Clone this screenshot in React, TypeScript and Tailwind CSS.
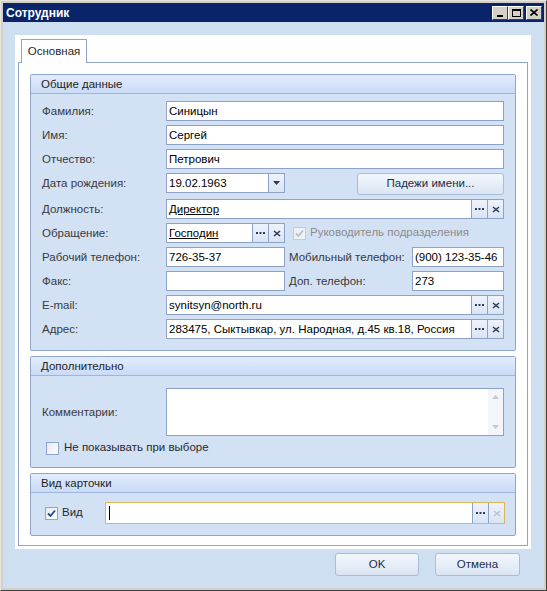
import { ReactNode } from 'react'

const font = { fontFamily: '"Liberation Sans", Arial, sans-serif' }

function Dots() {
  return (
    <div className="w-4 h-full flex items-center justify-center border-l border-[#8da2c4] bg-gradient-to-b from-[#eef3fb] to-[#d9e4f4]">
      <svg width="9" height="3" viewBox="0 0 9 3">
        <rect x="0" y="0" width="2" height="2" fill="#2b3d5c" />
        <rect x="3.5" y="0" width="2" height="2" fill="#2b3d5c" />
        <rect x="7" y="0" width="2" height="2" fill="#2b3d5c" />
      </svg>
    </div>
  )
}

function Clear({ faded }: { faded?: boolean }) {
  const c = faded ? '#b9c3d2' : '#2b3d5c'
  return (
    <div className="w-4 h-full flex items-center justify-center border-l border-[#8da2c4] bg-gradient-to-b from-[#eef3fb] to-[#d9e4f4]">
      <svg width="8" height="7" viewBox="0 0 8 7">
        <path d="M1 1 L7 6 M7 1 L1 6" stroke={c} strokeWidth="1.6" />
      </svg>
    </div>
  )
}

function Field({ value, link, buttons, className = '' }: { value?: string; link?: boolean; buttons?: boolean; className?: string }) {
  return (
    <div className={`h-5 flex bg-white border border-[#8da2c4] ${className}`}>
      <div className={`flex-1 px-[2px] leading-[18px] text-[11.5px] text-black truncate ${link ? 'underline' : ''}`}>{value}</div>
      {buttons && (
        <>
          <Dots />
          <Clear />
        </>
      )}
    </div>
  )
}

function Label({ children, w = 'w-[124px]' }: { children: ReactNode; w?: string }) {
  return <div className={`${w} shrink-0 text-[11.5px] text-[#3a3a3a] leading-5`}>{children}</div>
}

function Group({ title, children, className = '' }: { title: string; children: ReactNode; className?: string }) {
  return (
    <div className={`border border-[#8ea6ca] rounded-[2px] bg-[#d3e1f5] ${className}`}>
      <div className="h-[19px] px-[10px] text-[11.5px] leading-[19px] text-[#1f1f1f] bg-gradient-to-b from-[#e2ecfd] to-[#cadbf6] border-b border-[#9fb6dc]">
        {title}
      </div>
      {children}
    </div>
  )
}

function Check({ checked, disabled }: { checked?: boolean; disabled?: boolean }) {
  return (
    <div className={`w-[13px] h-[13px] border flex items-center justify-center ${disabled ? 'border-[#c4ccd8] bg-[#eef1f5]' : 'border-[#8ea6ca] bg-gradient-to-br from-[#e4e8ee] to-[#ffffff]'}`}>
      {checked && (
        <svg width="9" height="9" viewBox="0 0 9 9">
          <path d="M1 4.5 L3.5 7 L8 1.5" fill="none" stroke={disabled ? '#b8c0cc' : '#24468a'} strokeWidth="1.8" />
        </svg>
      )}
    </div>
  )
}

function Btn({ children, className = '' }: { children: ReactNode; className?: string }) {
  return (
    <div className={`flex items-center justify-center text-[11.5px] text-[#1e2d4a] border border-[#a9bdd8] rounded-[3px] bg-gradient-to-b from-[#f3f7fc] to-[#dae5f3] ${className}`}>
      {children}
    </div>
  )
}

function TitleBtn({ children }: { children: ReactNode }) {
  return (
    <div className="w-4 h-[14px] bg-[#d4d0c8] border border-t-white border-l-white border-r-[#404040] border-b-[#404040] flex items-center justify-center">
      {children}
    </div>
  )
}

export default function App() {
  return (
    <div style={font} className="w-[547px] h-[591px] bg-[#d4d0c8] border border-t-[#e8e6e1] border-l-[#e8e6e1] border-r-[#404040] border-b-[#404040] p-[2px] flex flex-col">
      <div className="h-[19px] bg-[#0a246a] flex items-center pl-[3px] pr-[2px]">
        <div className="flex-1 text-white font-bold text-[12px]">Сотрудник</div>
        <div className="flex">
          <TitleBtn>
            <div className="w-[6px] h-[2px] bg-black mt-[6px]" />
          </TitleBtn>
          <TitleBtn>
            <div className="w-[9px] h-[8px] border border-black border-t-2" />
          </TitleBtn>
          <div className="w-[2px]" />
          <TitleBtn>
            <svg width="8" height="7" viewBox="0 0 8 7">
              <path d="M0.5 0.5 L7.5 6.5 M7.5 0.5 L0.5 6.5" stroke="#000" strokeWidth="1.6" />
            </svg>
          </TitleBtn>
        </div>
      </div>

      <div className="flex-1 bg-[#cddff0] pt-[13px] pl-3 pr-3 flex flex-col">
        <div className="w-[516px] h-[514px] bg-white p-[3px] flex flex-col">
          <div className="flex pl-[3px] pt-[1px]">
            <div className="w-[66px] h-[24px] border border-b-0 border-[#8ea6ca] bg-white text-[11.5px] text-[#1f1f1f] flex items-center justify-center -mb-px relative">
              Основная
            </div>
          </div>
          <div className="flex-1 border border-[#8ea6ca] px-[11px] pt-[11px] flex flex-col gap-[5px]">
            <Group title="Общие данные" className="h-[277px]">
              <div className="px-[11px] pt-[7px] flex flex-col gap-1">
                <div className="flex">
                  <Label>Фамилия:</Label>
                  <Field value="Синицын" className="flex-1" />
                </div>
                <div className="flex">
                  <Label>Имя:</Label>
                  <Field value="Сергей" className="flex-1" />
                </div>
                <div className="flex">
                  <Label>Отчество:</Label>
                  <Field value="Петрович" className="flex-1" />
                </div>
                <div className="flex h-[22px]">
                  <Label>Дата рождения:</Label>
                  <div className="w-[119px] h-5 flex bg-white border border-[#8da2c4]">
                    <div className="flex-1 px-[2px] leading-[18px] text-[11.5px] text-black">19.02.1963</div>
                    <div className="w-4 h-full flex items-center justify-center border-l border-[#8da2c4] bg-gradient-to-b from-[#eef3fb] to-[#d9e4f4]">
                      <svg width="7" height="4" viewBox="0 0 7 4">
                        <path d="M0 0 H7 L3.5 4 Z" fill="#2b3d5c" />
                      </svg>
                    </div>
                  </div>
                  <div className="flex-1" />
                  <Btn className="w-[147px] h-[22px]">Падежи имени...</Btn>
                </div>
                <div className="flex">
                  <Label>Должность:</Label>
                  <Field value="Директор" link buttons className="flex-1" />
                </div>
                <div className="flex items-center">
                  <Label>Обращение:</Label>
                  <Field value="Господин" link buttons className="w-[119px]" />
                  <div className="ml-2">
                    <Check checked disabled />
                  </div>
                  <div className="ml-[4px] text-[11.5px] text-[#8c8c8c]">Руководитель подразделения</div>
                </div>
                <div className="flex">
                  <Label>Рабочий телефон:</Label>
                  <Field value="726-35-37" className="w-[119px]" />
                  <Label w="w-[127px] pl-[4px]">Мобильный телефон:</Label>
                  <Field value="(900) 123-35-46" className="flex-1" />
                </div>
                <div className="flex">
                  <Label>Факс:</Label>
                  <Field className="w-[119px]" />
                  <Label w="w-[127px] pl-[4px]">Доп. телефон:</Label>
                  <Field value="273" className="flex-1" />
                </div>
                <div className="flex">
                  <Label>E-mail:</Label>
                  <Field value="synitsyn@north.ru" buttons className="flex-1" />
                </div>
                <div className="flex">
                  <Label>Адрес:</Label>
                  <Field value="283475, Сыктывкар, ул. Народная, д.45 кв.18, Россия" buttons className="flex-1" />
                </div>
              </div>
            </Group>

            <Group title="Дополнительно" className="h-[112px]">
              <div className="px-[11px] pt-[12px]">
                <div className="flex items-center">
                  <Label>Комментарии:</Label>
                  <div className="flex-1 h-[48px] bg-white border border-[#8da2c4] flex justify-end">
                    <div className="w-[15px] h-full bg-[#f3f5f8] flex flex-col items-center justify-between py-[6px]">
                      <svg width="7" height="4" viewBox="0 0 7 4">
                        <path d="M0 4 H7 L3.5 0 Z" fill="#c3cad4" />
                      </svg>
                      <svg width="7" height="4" viewBox="0 0 7 4">
                        <path d="M0 0 H7 L3.5 4 Z" fill="#c3cad4" />
                      </svg>
                    </div>
                  </div>
                </div>
                <div className="flex items-center mt-[5px] pl-[4px] h-[14px]">
                  <Check />
                  <div className="ml-[5px] text-[11.5px] text-[#2a2a2a]">Не показывать при выборе</div>
                </div>
              </div>
            </Group>

            <Group title="Вид карточки" className="h-[63px]">
              <div className="pl-[14px] pr-[10px] pt-[9px] flex items-center">
                <Check checked />
                <div className="ml-[4px] w-[43px] text-[11.5px] text-[#2a2a2a]">Вид</div>
                <div className="flex-1 h-[22px] flex bg-white border border-[#e0b65a]">
                  <div className="flex-1 flex items-center pl-[3px]">
                    <div className="w-px h-[14px] bg-black" />
                  </div>
                  <Dots />
                  <Clear faded />
                </div>
              </div>
            </Group>
          </div>
        </div>

        <div className="flex justify-end gap-4 pr-[12px] pt-[4px]">
          <Btn className="w-[84px] h-[23px]">OK</Btn>
          <Btn className="w-[85px] h-[23px]">Отмена</Btn>
        </div>
      </div>
    </div>
  )
}
